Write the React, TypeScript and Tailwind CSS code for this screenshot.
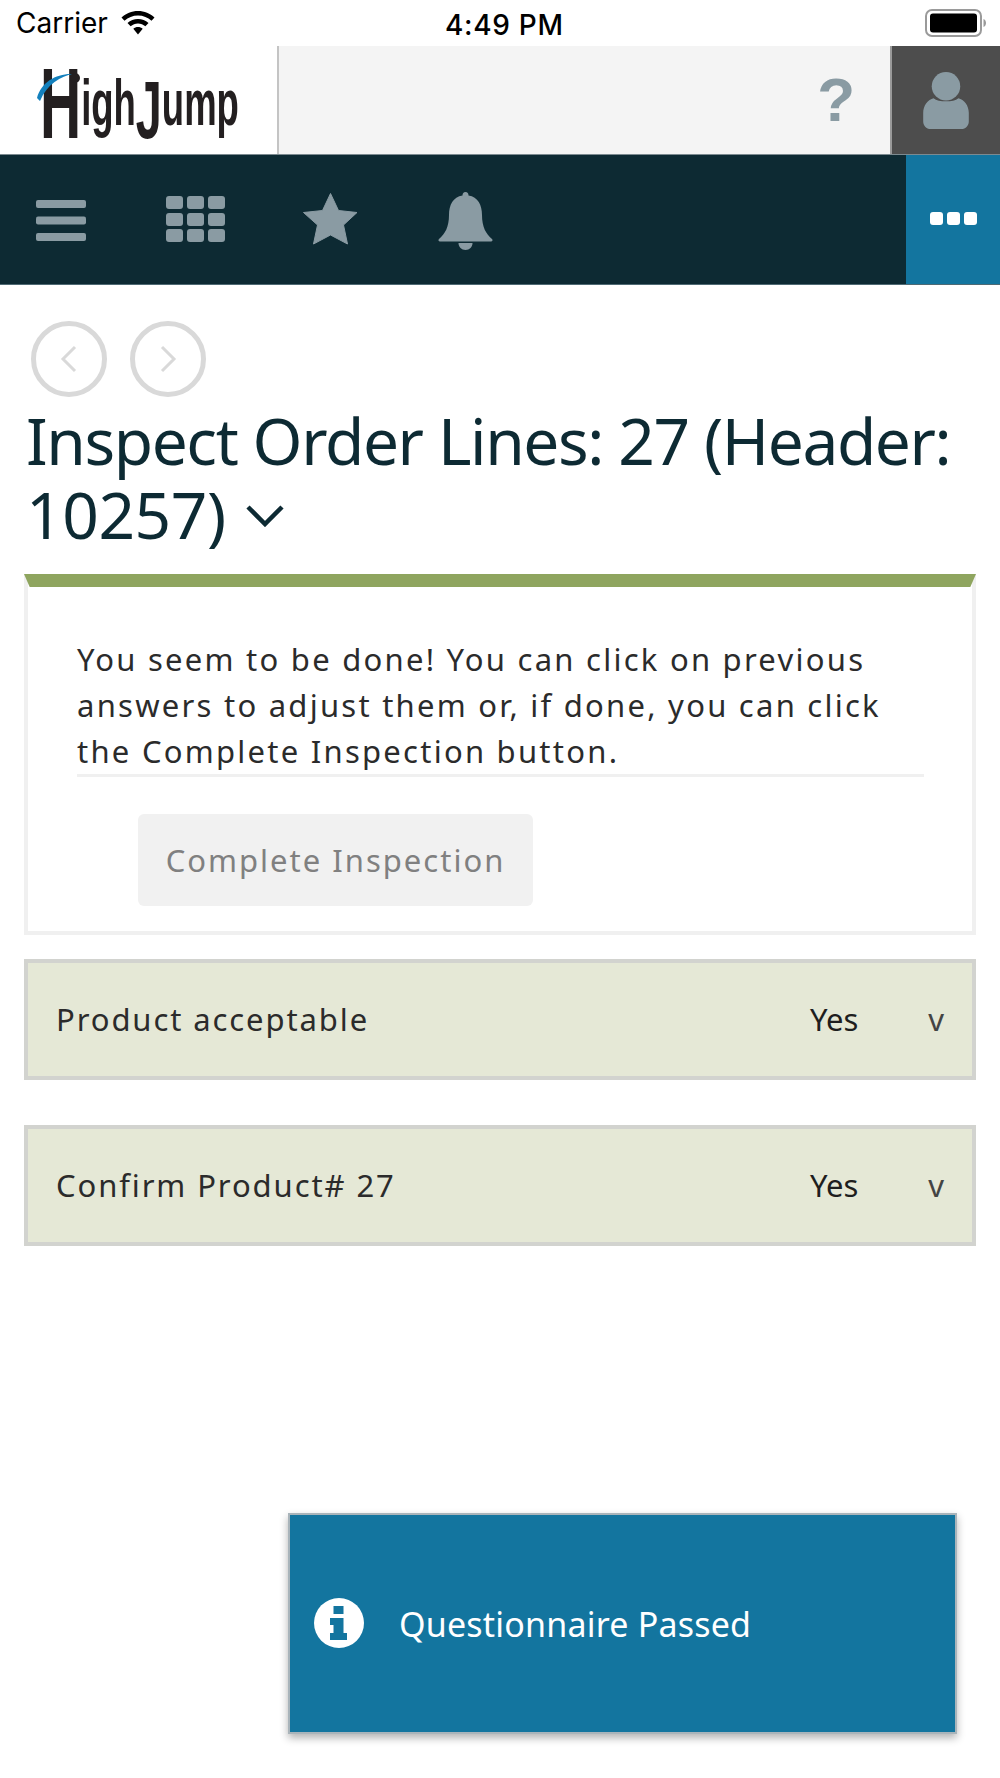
const ptsans = "font-['Noto_Sans',sans-serif]";

function Row({ label }: { label: string }) {
  return (
    <div className="flex h-[121px] items-center border-4 border-[#d2d3cf] bg-[#e5e8d6] pl-[28px] pr-[28px] text-[31px] text-[#2b2b2b]">
      <span className="flex-1 tracking-[1.9px]">{label}</span>
      <span className="mr-[70px] text-[#1e1e1e]">Yes</span>
      <span className="text-[#444]">v</span>
    </div>
  );
}

function Bars() {
  return (
    <svg width="50" height="42" viewBox="0 0 50 42" fill="#8a9ba3">
      <rect x="0" y="0" width="50" height="8" rx="2" />
      <rect x="0" y="16.5" width="50" height="8" rx="2" />
      <rect x="0" y="33" width="50" height="8" rx="2" />
    </svg>
  );
}

function Grid() {
  const xs = [0, 21, 42];
  const ys = [0, 17, 33];
  return (
    <svg width="59" height="46" viewBox="0 0 59 46" fill="#8a9ba3">
      {ys.map((y) => xs.map((x) => <rect key={`${x}-${y}`} x={x} y={y} width="17" height="13" rx="3" />))}
    </svg>
  );
}

function Star() {
  return (
    <svg width="55" height="52" viewBox="0 0 55 52" fill="#8a9ba3">
      <path d="M27.5 0.5 L35.5 17.5 L54 19.5 L40.5 32 L44.5 51 L27.5 42 L10.5 51 L14.5 32 L0.5 19.5 L19.5 17.5 Z" stroke="#8a9ba3" strokeWidth="1" strokeLinejoin="round" />
    </svg>
  );
}

function Bell() {
  return (
    <svg width="55" height="58" viewBox="0 0 55 58" fill="#8a9ba3">
      <path d="M27.5 0 C29.5 0 30.5 1.5 30.5 3.5 C40 5 44 13 44 23 C44 35 48 42 54 47 C55 48 54.5 49.5 53 49.5 L2 49.5 C0.5 49.5 0 48 1 47 C7 42 11 35 11 23 C11 13 15 5 24.5 3.5 C24.5 1.5 25.5 0 27.5 0 Z" />
      <path d="M20.5 51 L34.5 51 C34.5 55 31.5 58 27.5 58 C23.5 58 20.5 55 20.5 51 Z" />
    </svg>
  );
}

function Logo() {
  return (
    <div className="relative mt-[16px] h-[72px] w-[200px]">
      <div className="flex h-[72px] origin-left scale-x-[0.57] items-baseline whitespace-nowrap font-['Liberation_Sans',sans-serif] font-bold leading-none text-[#231f20]">
        <span className="relative top-[-5px] text-[100px] leading-[72px]">H</span>
        <span className="relative top-[-18px] text-[64px] leading-[72px]">igh</span>
        <span className="relative top-[-5px] text-[82px] leading-[72px]">J</span>
        <span className="relative top-[-18px] text-[64px] leading-[72px]">ump</span>
      </div>
      <svg className="absolute left-[-3px] top-[0px]" width="50" height="30" viewBox="0 0 50 30">
        <path d="M0 26 C4 10 20 1 36 2 C24 4 10 12 3 29 Z" fill="#1380bd" />
        <circle cx="38" cy="6" r="5" fill="#231f20" />
      </svg>
    </div>
  );
}

export default function App() {
  return (
    <div className={`relative h-[1778px] w-[1000px] overflow-hidden bg-white ${ptsans}`}>
      {/* status bar */}
      <div className="relative flex h-[46px] items-center justify-between pl-[16px] pr-[13px] font-['Inter',sans-serif] text-[28px] text-black">
        <div className="flex items-center gap-[13px]">
          <span>Carrier</span>
          <svg width="34" height="24" viewBox="0 0 34 24" fill="#000">
            <path d="M17 0 C23.5 0 29 2.5 33.5 6.5 L30.5 9.8 C26.8 6.5 22.3 4.5 17 4.5 C11.7 4.5 7.2 6.5 3.5 9.8 L0.5 6.5 C5 2.5 10.5 0 17 0 Z" />
            <path d="M17 8 C21 8 24.6 9.5 27.5 12 L24.4 15.3 C22.3 13.6 19.8 12.5 17 12.5 C14.2 12.5 11.7 13.6 9.6 15.3 L6.5 12 C9.4 9.5 13 8 17 8 Z" />
            <path d="M17 16 C18.8 16 20.4 16.6 21.7 17.7 L17 23.5 L12.3 17.7 C13.6 16.6 15.2 16 17 16 Z" />
          </svg>
        </div>
        <span className="absolute left-[445px] top-[5px] font-medium leading-[40px] tracking-[0.7px]">4:49 PM</span>
        <svg width="62" height="28" viewBox="0 0 62 28">
          <rect x="1" y="1" width="55" height="26" rx="6" fill="none" stroke="#9a9a9a" strokeWidth="2" />
          <rect x="5" y="4.500" width="47" height="19" rx="3" fill="#000" />
          <path d="M58.500 10 C60.500 11 61 12.500 61 14 C61 15.500 60.500 17 58.500 18 Z" fill="#9a9a9a" />
        </svg>
      </div>

      {/* header */}
      <div className="flex h-[109px] border-b border-[#7c8a90]">
        <div className="flex w-[279px] items-center justify-start border-r-2 border-[#c4c4c4] pl-[40px]">
          <Logo />
        </div>
        <div className="flex flex-1 items-center justify-end bg-[#f4f4f4] pr-[35px]">
          <span className="font-['Liberation_Sans',sans-serif] text-[62px] font-bold leading-none text-[#8a9ba3]">?</span>
        </div>
        <div className="flex w-[110px] items-center justify-center border-l-2 border-[#9a9a9a] bg-[#4d4d4d]">
          <svg width="48" height="57" viewBox="0 0 50 60" fill="#8a9ba3">
            <circle cx="25" cy="15" r="15" />
            <path d="M12 27.500 C17 32 33 32 38 27.500 C44 29 49 35 49 43 L49 52 C49 56 46 60 41 60 L9 60 C4 60 1 56 1 52 L1 43 C1 35 6 29 12 27.500 Z" />
          </svg>
        </div>
      </div>

      {/* nav */}
      <div className="flex h-[130px] items-stretch border-b border-[#4f6a74] bg-[#0d2a33]">
        <div className="flex flex-1 items-center pb-[2px]">
          <div className="ml-[36px] mt-[4px] flex items-center"><Bars /></div>
          <div className="ml-[80px] flex items-center"><Grid /></div>
          <div className="ml-[78px] flex items-center"><Star /></div>
          <div className="ml-[80px] mt-[4px] flex items-center"><Bell /></div>
        </div>
        <div className="flex w-[94px] items-center justify-center gap-[4px] bg-[#13759f] pb-[2px]">
          <span className="h-[13px] w-[13px] rounded-[3px] bg-white" />
          <span className="h-[13px] w-[13px] rounded-[3px] bg-white" />
          <span className="h-[13px] w-[13px] rounded-[3px] bg-white" />
        </div>
      </div>

      {/* content */}
      <div className="px-[24px]">
        <div className="ml-[7px] mt-[36px] flex gap-[23px]">
          <div className="flex h-[76px] w-[76px] items-center justify-center rounded-full border-[5px] border-[#d9d9d9]">
            <svg width="18" height="28" viewBox="0 0 18 28" fill="none" stroke="#d9d9d9" strokeWidth="3"><path d="M15 2 L3 14 L15 26" /></svg>
          </div>
          <div className="flex h-[76px] w-[76px] items-center justify-center rounded-full border-[5px] border-[#d9d9d9]">
            <svg width="18" height="28" viewBox="0 0 18 28" fill="none" stroke="#d9d9d9" strokeWidth="3"><path d="M3 2 L15 14 L3 26" /></svg>
          </div>
        </div>

        <h1 className="ml-[2px] mt-[8px] text-[64px] font-normal leading-[72px] tracking-[-1.4px] text-[#0d2a33]">
          <span className="block whitespace-nowrap">Inspect Order Lines: 27 (Header:</span>
          <span className="mt-[2px] flex items-center gap-[20px] tracking-[-0.4px]">
            10257)
            <svg width="38" height="23" viewBox="0 0 38 23" fill="none" stroke="#0d2a33" strokeWidth="4.500"><path d="M2 3 L19 20 L36 3" /></svg>
          </span>
        </h1>

        <div className="mt-[23px] border-x-4 border-b-4 border-[#f0f0f0] pb-[25px]">
          <div className="-mx-[4px] h-[13px] bg-[#8fa55f] [clip-path:polygon(0_0,100%_0,99.4%_100%,0.6%_100%)]" />
          <div className="ml-[49px] mr-[48px] mt-[49px] border-b-[3px] border-[#f0f0f0] text-[31px] leading-[46px] tracking-[2.25px] text-[#2b2b2b]">
            You seem to be done! You can click on previous answers to adjust them or, if done, you can click the Complete Inspection button.
          </div>
          <div className="ml-[110px] mt-[37px] flex h-[92px] w-[395px] items-center justify-center rounded-[6px] bg-[#f1f1f1] text-[31px] tracking-[2px] text-[#808080]">
            Complete Inspection
          </div>
        </div>

        <div className="mt-[24px] flex flex-col gap-[45px]">
          <Row label="Product acceptable" />
          <Row label="Confirm Product# 27" />
        </div>
      </div>

      {/* toast */}
      <div className="absolute left-[288px] top-[1513px] flex h-[221px] w-[669px] items-center border-2 border-[#a9b4ba] bg-[#13759f] pl-[24px] text-white shadow-[0_4px_8px_rgba(0,0,0,0.3)]">
        <svg width="50" height="50" viewBox="0 0 50 50" className="mb-[2px]">
          <circle cx="25" cy="25" r="25" fill="#fff" />
          <rect x="19.500" y="8" width="10" height="8" fill="#13759f" />
          <path d="M16 20 L29.500 20 L29.500 35 L33 35 L33 42 L16 42 L16 35 L19.500 35 L19.500 27 L16 27 Z" fill="#13759f" />
        </svg>
        <span className="ml-[35px] text-[34px] leading-[40px] tracking-[0.2px]">Questionnaire Passed</span>
      </div>
    </div>
  );
}
